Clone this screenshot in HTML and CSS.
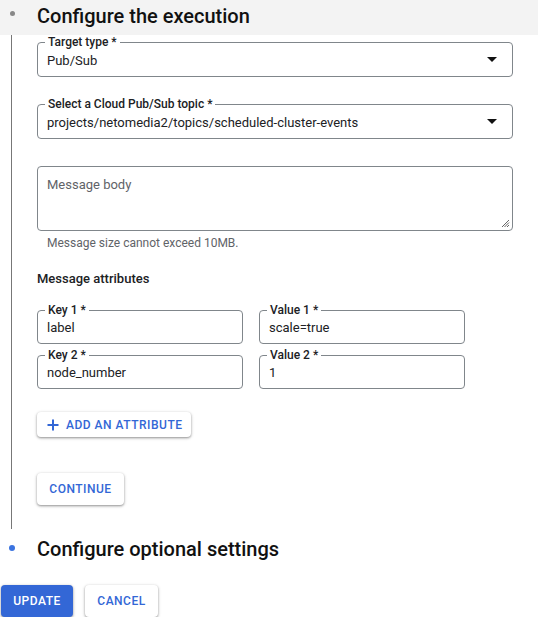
FILE: index.html
```html
<!DOCTYPE html>
<html>
<head>
<meta charset="utf-8">
<link rel="stylesheet" href="styles.css">
</head>
<body>
<div class="step-head grey">
  <span class="dot"></span>
  <span class="step-title">Configure the execution</span>
</div>
<div class="step-body">
  <div class="field select">
    <span class="label">Target type *</span>
    <span class="value">Pub/Sub</span>
    <span class="arrow"></span>
  </div>
  <div class="field select gap">
    <span class="label">Select a Cloud Pub/Sub topic *</span>
    <span class="value">projects/netomedia2/topics/scheduled-cluster-events</span>
    <span class="arrow"></span>
  </div>
  <div class="field textarea">
    <span class="placeholder">Message body</span>
    <svg class="grip" width="10" height="10" viewBox="0 0 10 10"><path d="M9 2 L2 9 M9 4.5 L4.5 9 M9 7 L7 9" stroke="#666" stroke-width="1"/></svg>
  </div>
  <div class="hint">Message size cannot exceed 10MB.</div>
  <div class="subhead">Message attributes</div>
  <div class="attrs">
    <div class="field small"><span class="label">Key 1 *</span><span class="value">label</span></div>
    <div class="field small"><span class="label">Value 1 *</span><span class="value">scale=true</span></div>
    <div class="field small"><span class="label">Key 2 *</span><span class="value">node_number</span></div>
    <div class="field small"><span class="label">Value 2 *</span><span class="value">1</span></div>
  </div>
  <button class="btn add"><svg width="12" height="12" viewBox="0 0 12 12"><path d="M6 0.5V11.5M0.5 6H11.5" stroke="#3367d6" stroke-width="2"/></svg>ADD AN ATTRIBUTE</button>
  <button class="btn cont">CONTINUE</button>
</div>
<div class="step-head second">
  <span class="dot blue"></span>
  <span class="step-title">Configure optional settings</span>
</div>
<div class="actions">
  <button class="btn primary">UPDATE</button>
  <button class="btn cancel">CANCEL</button>
</div>
</body>
</html>
```
FILE: styles.css
```css
body {
  margin: 0;
  font-family: Roboto, "Liberation Sans", sans-serif;
  color: #202124;
  background: #fff;
  width: 538px;
}
.step-head {
  height: 35px;
  display: flex;
  align-items: center;
  position: relative;
}
.step-head.grey { background: #f3f3f3; }
.step-head.grey .step-title { margin-top: -4px; }
.step-head.second { height: 40px; }
.dot {
  position: absolute;
  left: 10px;
  top: 11px;
  width: 5px;
  height: 5px;
  border-radius: 50%;
  background: #888;
}
.dot.blue { background: #3b73e0; width: 6px; height: 6px; top: 16px; left: 9px; }
.step-title {
  margin-left: 37px;
  font-size: 20px;
  font-weight: 500;
  color: #111;
}
.step-body {
  margin-left: 11px;
  border-left: 1px solid #777;
  padding: 7px 0 24px 25px;
  width: 476px;
  display: flex;
  flex-direction: column;
  align-items: flex-start;
}
.field {
  position: relative;
  box-sizing: border-box;
  border: 1px solid #80868b;
  border-radius: 4px;
  width: 476px;
  height: 35px;
  display: flex;
  align-items: center;
  padding: 0 9px;
  font-size: 13px;
}
.field .label {
  position: absolute;
  top: -7px;
  left: 7px;
  background: #fff;
  padding: 0 3px;
  font-size: 12px;
  font-weight: 500;
  line-height: 12px;
  color: #202124;
}
.field .value { margin-top: 1px; color: #202124; }
.select.gap { margin-top: 27px; }
.arrow {
  position: absolute;
  right: 15px;
  top: 14px;
  width: 0; height: 0;
  border-left: 5px solid transparent;
  border-right: 5px solid transparent;
  border-top: 5px solid #111;
}
.textarea {
  margin-top: 27px;
  height: 65px;
  align-items: flex-start;
  padding-top: 10px;
}
.placeholder { color: #5f6368; font-size: 13px; }
.grip { position: absolute; right: 2px; bottom: 2px; }
.hint {
  font-size: 12px;
  color: #5f6368;
  margin: 5px 0 0 10px;
}
.subhead {
  font-size: 13px;
  font-weight: 500;
  margin-top: 21px;
  color: #202124;
}
.attrs {
  margin-top: 24px;
  display: grid;
  grid-template-columns: 206px 206px;
  column-gap: 16px;
  row-gap: 11px;
}
.field.small { width: 206px; height: 34px; }
.btn {
  font-family: Roboto, "Liberation Sans", sans-serif;
  font-size: 12px;
  font-weight: 500;
  color: #3367d6;
  background: #fff;
  border: none;
  border-radius: 4px;
  box-shadow: 0 1px 2px rgba(0,0,0,0.3), 0 1px 3px 1px rgba(0,0,0,0.12);
  letter-spacing: 0.5px;
  cursor: pointer;
  padding: 0;
}
.add {
  margin-top: 23px;
  height: 25px;
  padding: 0 9px 0 10px;
  display: flex;
  align-items: center;
  gap: 7px;
}
.cont {
  margin-top: 36px;
  height: 32px;
  width: 87px;
}
.actions {
  display: flex;
  gap: 12px;
  margin-top: 16px;
  padding-left: 1px;
}
.primary {
  background: #3367d6;
  color: #fff;
  width: 72px;
  height: 32px;
}
.cancel { width: 73px; height: 32px; }
```
